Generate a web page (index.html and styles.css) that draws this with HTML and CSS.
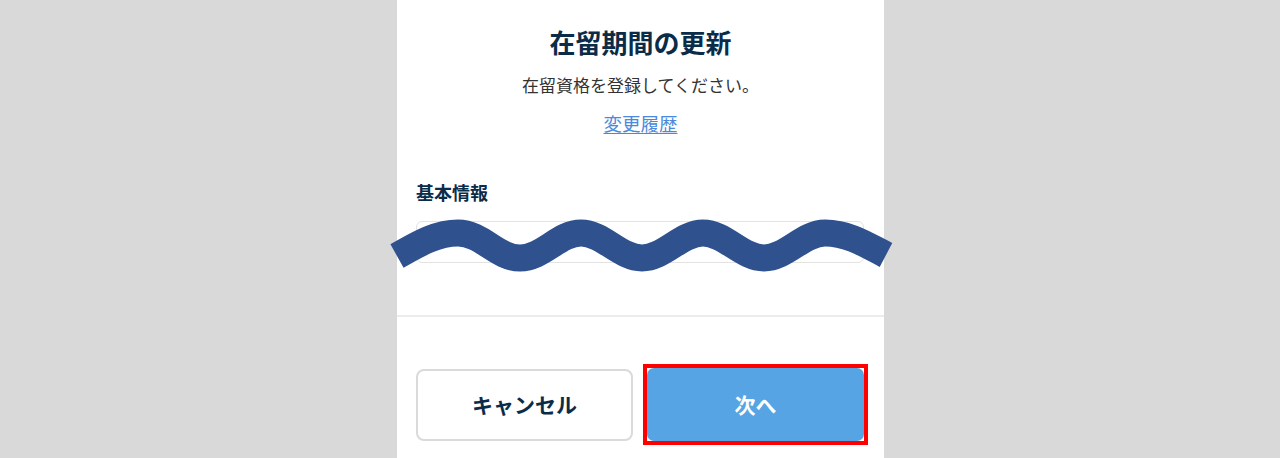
FILE: index.html
```html
<!DOCTYPE html>
<html lang="ja">
<head>
<meta charset="utf-8">
<title>在留期間の更新</title>
<link rel="stylesheet" href="styles.css">
</head>
<body>
<div class="page">
  <main class="panel">
    <header class="head">
      <h1 class="title">在留期間の更新</h1>
      <p class="lead">在留資格を登録してください。</p>
      <a class="history" href="#">変更履歴</a>
    </header>
    <section class="form">
      <h2 class="section-title">基本情報</h2>
      <div class="field"></div>
    </section>
    <footer class="actions">
      <button class="btn btn-cancel" type="button">キャンセル</button>
      <span class="highlight"><button class="btn btn-next" type="button">次へ</button></span>
    </footer>
  </main>
  <svg class="wave" width="1280" height="458" viewBox="0 0 1280 458" aria-hidden="true">
    <path d="M397,256 C415,246 435,233 458,233 C482,233 497,258 520,258 S559,233 581,233 S620,258 642,258 S681,233 703,233 S742,258 764,258 S803,233 825,233 C848,233 867,245 886,255" fill="none" stroke="#2f528f" stroke-width="27" stroke-linecap="butt"/>
  </svg>
</div>
</body>
</html>
```

FILE: styles.css
```css
* { box-sizing: border-box; }
html, body { margin: 0; padding: 0; }
body {
  background: #d9d9d9;
  font-family: "Noto Sans CJK JP", "Noto Sans", sans-serif;
  color: #333;
}
.page {
  position: relative;
  width: 1280px;
  height: 458px;
  overflow: hidden;
}
.panel {
  width: 487px;
  height: 458px;
  margin-left: 397px;
  background: #fff;
  display: grid;
  grid-template-rows: 136px 181px 1fr;
}
.head {
  padding-top: 26px;
  display: flex;
  flex-direction: column;
  align-items: center;
}
.title {
  margin: 0;
  font-size: 26px;
  line-height: 32px;
  font-weight: 700;
  color: #0b2c49;
}
.lead {
  margin: 15px 0 0;
  font-size: 17px;
  line-height: 24px;
  color: #333;
}
.history {
  margin-top: 14px;
  font-size: 18.5px;
  line-height: 24px;
  color: #4a89dc;
  text-decoration: underline;
  text-underline-offset: 2px;
}
.form {
  padding: 43px 20px 0 19px;
  border-bottom: 2px solid #ececec;
}
.section-title {
  margin: 0;
  font-size: 18px;
  line-height: 26px;
  font-weight: 700;
  color: #0b2c49;
}
.field {
  margin-top: 16px;
  height: 42px;
  border: 1px solid #e3e3e3;
  border-radius: 6px;
}
.actions {
  padding: 52px 20px 0 19px;
  display: grid;
  grid-template-columns: 217px 217px;
  grid-auto-rows: min-content;
  column-gap: 14px;
}
.btn {
  display: block;
  width: 217px;
  height: 72px;
  border-radius: 8px;
  font-family: "Noto Sans CJK JP", "Noto Sans", sans-serif;
  font-size: 21px;
  font-weight: 700;
  padding: 0 0 2px;
  cursor: pointer;
}
.btn-cancel {
  background: #fff;
  border: 2px solid #dadada;
  color: #0b2c49;
}
.highlight {
  display: block;
  margin: -5px -4px 0 -4px;
  width: 225px;
  height: 81px;
  border: 4px solid #ff0000;
}
.btn-next {
  background: #57a4e4;
  border: none;
  border-radius: 7px;
  color: #fff;
  height: 73px;
}
.wave {
  position: absolute;
  left: 0;
  top: 0;
  pointer-events: none;
}
```
